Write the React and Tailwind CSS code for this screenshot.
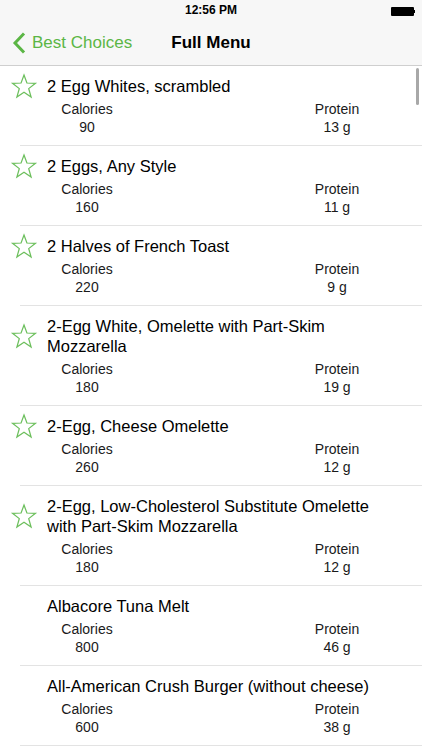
import React from "react";

const items = [
  { name: "2 Egg Whites, scrambled", calories: 90, protein: "13 g", fav: true },
  { name: "2 Eggs, Any Style", calories: 160, protein: "11 g", fav: true },
  { name: "2 Halves of French Toast", calories: 220, protein: "9 g", fav: true },
  { name: "2-Egg White, Omelette with Part-Skim Mozzarella", calories: 180, protein: "19 g", fav: true },
  { name: "2-Egg, Cheese Omelette", calories: 260, protein: "12 g", fav: true },
  { name: "2-Egg, Low-Cholesterol Substitute Omelette with Part-Skim Mozzarella", calories: 180, protein: "12 g", fav: true },
  { name: "Albacore Tuna Melt", calories: 800, protein: "46 g", fav: false },
  { name: "All-American Crush Burger (without cheese)", calories: 600, protein: "38 g", fav: false },
];

function Star() {
  return (
    <svg width="28" height="27" viewBox="0 0 24 24" fill="none" className="shrink-0">
      <polygon
        points="12,1.8 14.6,8.9 22.2,9.2 16.2,13.9 18.3,21.3 12,17 5.7,21.3 7.8,13.9 1.8,9.2 9.4,8.9"
        stroke="#6cbf5c"
        strokeWidth="1.1"
        strokeLinejoin="miter"
      />
    </svg>
  );
}

function MenuRow({ item }) {
  return (
    <div>
      <div className="pt-[10px] pb-[9px]">
        <div className="flex items-center">
          <div className="w-[47px] h-[20px] flex items-center justify-center shrink-0">
            {item.fav && <Star />}
          </div>
          <div className="flex-1 pr-[40px] text-[16.5px] leading-[20px] text-black">
            {item.name}
          </div>
        </div>
        <div className="flex mt-[4px] text-[14px] leading-[18px] text-[#1a1a1a]">
          <div className="ml-[47px] w-[80px] flex flex-col items-center">
            <span>Calories</span>
            <span>{item.calories}</span>
          </div>
          <div className="ml-[170px] w-[80px] flex flex-col items-center">
            <span>Protein</span>
            <span>{item.protein}</span>
          </div>
        </div>
      </div>
      <div className="ml-[20px] h-px bg-[#e3e3e3]" />
    </div>
  );
}

export default function App() {
  return (
    <div
      className="relative w-[422px] h-[750px] overflow-hidden bg-white"
      style={{ fontFamily: '"Liberation Sans", Arial, sans-serif' }}
    >
      {/* status bar */}
      <div className="h-[20px] bg-[#f7f7f7] flex items-center justify-center relative">
        <span className="text-[12px] font-bold text-black">12:56 PM</span>
        <div className="absolute right-[7px] top-[7px] flex items-center">
          <div className="w-[23px] h-[9px] bg-black rounded-[1px]" />
          <div className="w-[1.5px] h-[3px] bg-black" />
        </div>
      </div>

      {/* nav bar */}
      <div className="h-[46px] bg-[#f7f7f7] border-b border-[#cfcfcf] grid grid-cols-[1fr_auto_1fr] items-center">
        <div className="flex items-center pl-[12px]">
          <svg width="14" height="22" viewBox="0 0 14 22" fill="none">
            <path d="M11 2.5 L3 11 L11 19.5" stroke="#5bb645" strokeWidth="3" strokeLinecap="square" />
          </svg>
          <span className="ml-[6px] text-[17px] text-[#5bb645]">Best Choices</span>
        </div>
        <div className="text-[17px] font-bold text-black">Full Menu</div>
        <div />
      </div>

      {/* list */}
      <div>
        {items.map((item, i) => (
          <MenuRow key={i} item={item} />
        ))}
      </div>

      {/* scroll indicator */}
      <div className="absolute left-[416px] top-[68px] w-[3px] h-[37px] rounded-full bg-[#a8a8a8]" />
    </div>
  );
}
